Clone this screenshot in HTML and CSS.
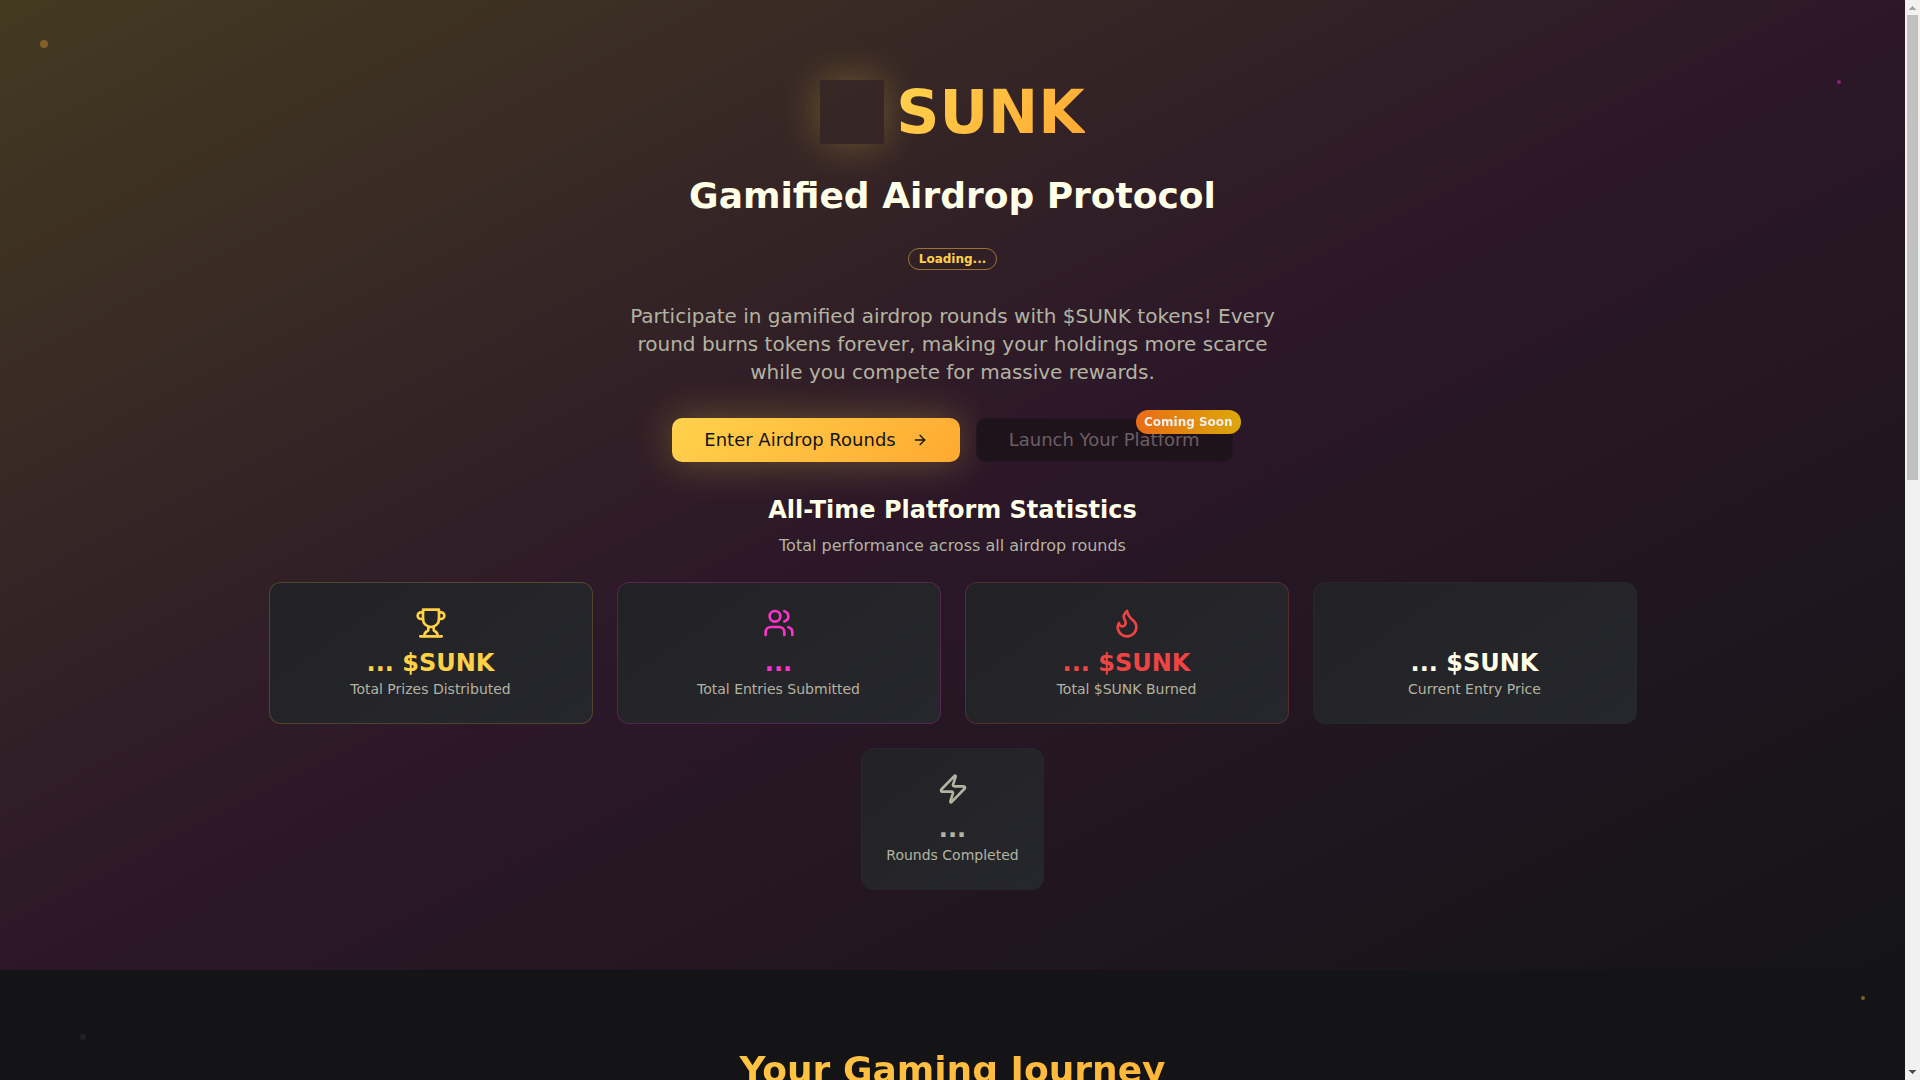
FILE: index.html
```html
<!DOCTYPE html>
<html lang="en">
<head>
    <meta charset="UTF-8">
    <meta name="viewport" content="width=device-width, initial-scale=1.0">
    <title>SUNK - Gamified Airdrop Protocol</title>
    <link rel="stylesheet" href="styles.css">
</head>
<body>
    <main class="page">
        <section class="hero">
            <div class="container">
                <div class="brand">
                    <div class="brand-logo"></div>
                    <h1 class="brand-name">SUNK</h1>
                </div>
                <h2 class="hero-title">Gamified Airdrop Protocol</h2>
                <div class="status">Loading...</div>
                <p class="hero-text">Participate in gamified airdrop rounds with $SUNK tokens! Every round burns tokens forever, making your holdings more scarce while you compete for massive rewards.</p>

                <div class="actions">
                    <button class="btn btn-primary">
                        Enter Airdrop Rounds
                        <svg class="icon btn-icon" viewBox="0 0 24 24"><path d="M5 12h14"/><path d="m12 5 7 7-7 7"/></svg>
                    </button>
                    <div class="soon">
                        <button class="btn btn-disabled" disabled>Launch Your Platform</button>
                        <span class="soon-badge">Coming Soon</span>
                    </div>
                </div>

                <h3 class="stats-title">All-Time Platform Statistics</h3>
                <p class="stats-text">Total performance across all airdrop rounds</p>

                <div class="stats">
                    <div class="card gold">
                        <svg class="icon card-icon" viewBox="0 0 24 24"><path d="M6 9H4.5a2.5 2.5 0 0 1 0-5H6"/><path d="M18 9h1.5a2.5 2.5 0 0 0 0-5H18"/><path d="M4 22h16"/><path d="M10 14.66V17c0 .55-.47.98-.97 1.21C7.85 18.75 7 20.24 7 22"/><path d="M14 14.66V17c0 .55.47.98.97 1.21C16.15 18.75 17 20.24 17 22"/><path d="M18 2H6v7a6 6 0 0 0 12 0V2Z"/></svg>
                        <div class="card-value">... $SUNK</div>
                        <div class="card-label">Total Prizes Distributed</div>
                    </div>
                    <div class="card pink">
                        <svg class="icon card-icon" viewBox="0 0 24 24"><path d="M16 21v-2a4 4 0 0 0-4-4H6a4 4 0 0 0-4 4v2"/><circle cx="9" cy="7" r="4"/><path d="M22 21v-2a4 4 0 0 0-3-3.87"/><path d="M16 3.13a4 4 0 0 1 0 7.75"/></svg>
                        <div class="card-value">...</div>
                        <div class="card-label">Total Entries Submitted</div>
                    </div>
                    <div class="card red">
                        <svg class="icon card-icon" viewBox="0 0 24 24"><path d="M8.5 14.5A2.5 2.5 0 0 0 11 12c0-1.38-.5-2-1-3-1.072-2.143-.224-4.054 2-6 .5 2.5 2 4.9 4 6.5 2 1.6 3 3.5 3 5.5a7 7 0 1 1-14 0c0-1.153.433-2.294 1-3a2.5 2.5 0 0 0 2.5 2.5z"/></svg>
                        <div class="card-value">... $SUNK</div>
                        <div class="card-label">Total $SUNK Burned</div>
                    </div>
                    <div class="card">
                        <div class="card-icon"></div>
                        <div class="card-value">... $SUNK</div>
                        <div class="card-label">Current Entry Price</div>
                    </div>
                </div>
                <div class="card muted">
                    <svg class="icon card-icon" viewBox="0 0 24 24"><path d="M4 14a1 1 0 0 1-.78-1.63l9.9-10.2a.5.5 0 0 1 .86.46l-1.92 6.02A1 1 0 0 0 13 10h7a1 1 0 0 1 .78 1.63l-9.9 10.2a.5.5 0 0 1-.86-.46l1.92-6.02A1 1 0 0 0 11 14z"/></svg>
                    <div class="card-value">...</div>
                    <div class="card-label">Rounds Completed</div>
                </div>
            </div>
        </section>

        <section class="journey">
            <div class="container">
                <h2 class="journey-title">Your Gaming Journey</h2>
            </div>
        </section>
    </main>

    <!-- Floating particles -->
    <span class="dot dot-1"></span>
    <span class="dot dot-2"></span>
    <span class="dot dot-3"></span>
    <span class="dot dot-4"></span>

    <div class="scrollbar">
        <svg class="arrow" viewBox="0 0 15 15"><path fill="#a3a3a3" d="M7 6h1v1h1v1h1v1h1v1H4V9h1V8h1V7h1z"/></svg>
        <div class="thumb"></div>
        <svg class="arrow" viewBox="0 0 15 15"><path fill="#505050" d="M4 5h7v1h-1v1H9v1H8v1H7V8H6V7H5V6H4z"/></svg>
    </div>
</body>
</html>
```

FILE: styles.css
```css
:root {
    --bg: #141416;
    --text: #fffee6;
    --muted: #b3b3a1;
    --gold: #ffd147;
    --pink: #ff33cc;
    --red: #ef4444;
    --gold-gradient: linear-gradient(135deg, #ffd24d, #ffa931);
}
* {
    box-sizing: border-box;
    margin: 0;
    padding: 0;
}
html, body {
    height: 100%;
    overflow: hidden;
}
body {
    background: var(--bg);
    color: var(--text);
    font-family: "DejaVu Sans", sans-serif;
    font-size: 16px;
    line-height: 24px;
}
.page {
    margin-right: 15px;
}
.container {
    display: flex;
    flex-direction: column;
    align-items: center;
    max-width: 1400px;
    margin: 0 auto;
    padding: 0 16px;
    text-align: center;
}
.icon {
    fill: none;
    stroke: currentColor;
    stroke-width: 2;
    stroke-linecap: round;
    stroke-linejoin: round;
}

/* Hero */
.hero {
    padding: 80px 0;
    background: linear-gradient(to bottom right, rgba(255, 209, 77, 0.2), rgba(255, 51, 204, 0.1), var(--bg));
}
.brand {
    display: flex;
    align-items: center;
    gap: 12px;
    margin-bottom: 32px;
}
.brand-logo {
    width: 64px;
    height: 64px;
    box-shadow: 0 0 40px rgba(255, 209, 71, 0.3);
}
.brand-name {
    font-size: 60px;
    line-height: 60px;
    background: var(--gold-gradient);
    -webkit-background-clip: text;
    background-clip: text;
    color: transparent;
}
.hero-title {
    margin-bottom: 32px;
    font-size: 36px;
    line-height: 40px;
}
.status {
    margin-bottom: 32px;
    padding: 2px 10px;
    border: 1px solid rgba(255, 200, 60, 0.5);
    border-radius: 11px;
    color: var(--gold);
    font-size: 12px;
    font-weight: bold;
    line-height: 16px;
}
.hero-text {
    max-width: 672px;
    margin-bottom: 32px;
    color: var(--muted);
    font-size: 20px;
    line-height: 28px;
}
.actions {
    display: flex;
    gap: 16px;
    margin-bottom: 32px;
}
.btn {
    display: flex;
    align-items: center;
    height: 44px;
    padding: 0 32px;
    border: none;
    border-radius: 10px;
    font-family: inherit;
    font-size: 18px;
    line-height: 28px;
}
.btn-primary {
    gap: 16px;
    background: var(--gold-gradient);
    color: var(--bg);
    box-shadow: 0 0 40px rgba(255, 209, 71, 0.3);
}
.btn-icon {
    width: 16px;
    height: 16px;
}
.btn-disabled {
    border: 1px solid rgba(40, 23, 38, 0.5);
    background: #1f131b;
    color: #6b5f63;
}
.soon {
    position: relative;
}
.soon-badge {
    position: absolute;
    top: -8px;
    right: -8px;
    padding: 4px 8px;
    border-radius: 12px;
    background: linear-gradient(to right, #f97316, #eab308);
    color: #fff;
    font-size: 12px;
    font-weight: bold;
    line-height: 16px;
    white-space: nowrap;
    opacity: 0.93;
}

/* Statistics */
.stats-title {
    margin-bottom: 8px;
    font-size: 24px;
    line-height: 32px;
}
.stats-text {
    margin-bottom: 24px;
    color: var(--muted);
}
.stats {
    display: grid;
    grid-template-columns: repeat(4, 1fr);
    gap: 24px;
    width: 100%;
    margin-bottom: 24px;
}
.card {
    display: flex;
    flex-direction: column;
    align-items: center;
    padding: 24px;
    border: 1px solid #27272a;
    border-radius: 12px;
    background: linear-gradient(145deg, #222226, #26272c);
}
.card-icon {
    width: 32px;
    height: 32px;
    margin-bottom: 8px;
}
.card-value {
    font-size: 24px;
    font-weight: bold;
    line-height: 32px;
}
.card-label {
    color: var(--muted);
    font-size: 14px;
    line-height: 20px;
}
.gold {
    border-color: rgba(255, 209, 71, 0.2);
    color: var(--gold);
}
.pink {
    border-color: rgba(255, 51, 204, 0.22);
    color: var(--pink);
}
.red {
    border-color: rgba(239, 68, 68, 0.25);
    color: var(--red);
}
.muted {
    color: var(--muted);
}

/* Journey */
.journey {
    padding: 80px 0;
}
.journey-title {
    width: 100%;
    font-size: 36px;
    line-height: 40px;
    background: var(--gold-gradient);
    -webkit-background-clip: text;
    background-clip: text;
    color: transparent;
}

/* Particles */
.dot {
    position: fixed;
    width: 4px;
    height: 4px;
    border-radius: 50%;
}
.dot-1 {
    top: 40px;
    left: 40px;
    width: 8px;
    height: 8px;
    background: rgba(255, 176, 60, 0.35);
}
.dot-2 {
    top: 80px;
    left: 1837px;
    background: rgba(255, 51, 204, 0.45);
}
.dot-3 {
    top: 996px;
    left: 1861px;
    background: rgba(255, 209, 71, 0.42);
}
.dot-4 {
    top: 1034px;
    left: 80px;
    width: 6px;
    height: 6px;
    background: #222225;
}

/* Scrollbar */
.scrollbar {
    position: fixed;
    top: 0;
    right: 0;
    display: flex;
    flex-direction: column;
    justify-content: space-between;
    width: 15px;
    height: 100%;
    background: #f1f1f1;
}
.arrow {
    display: block;
    width: 15px;
    height: 15px;
}
.thumb {
    width: 11px;
    height: 465px;
    margin: 0 2px auto;
    background: #c1c1c1;
}
```
